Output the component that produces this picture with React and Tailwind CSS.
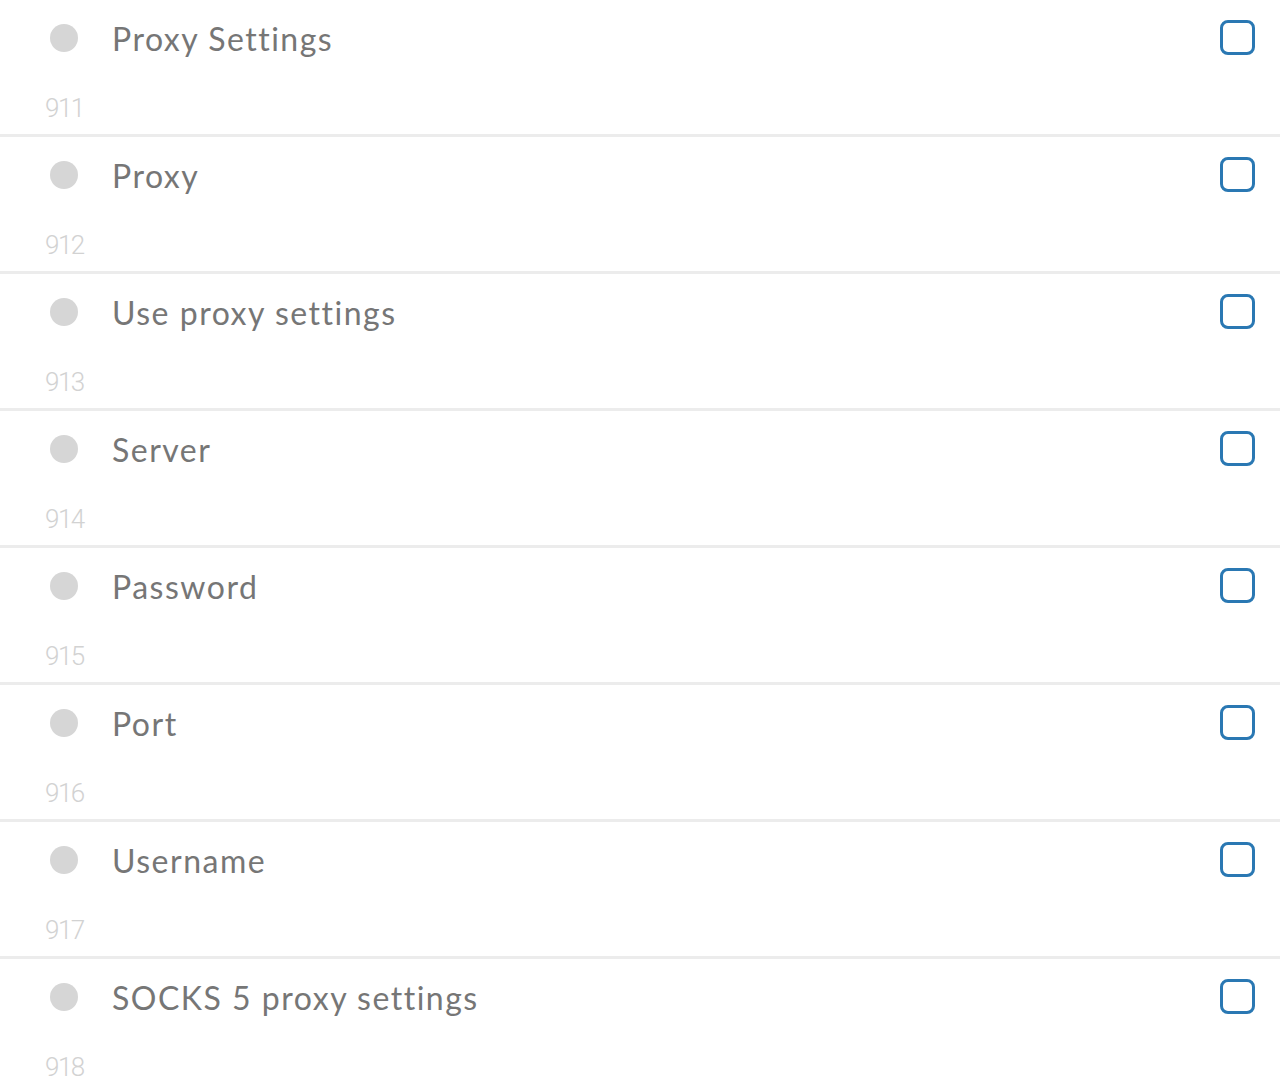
import React from 'react';

const items = [
  { title: 'Proxy Settings', num: 911 },
  { title: 'Proxy', num: 912 },
  { title: 'Use proxy settings', num: 913 },
  { title: 'Server', num: 914 },
  { title: 'Password', num: 915 },
  { title: 'Port', num: 916 },
  { title: 'Username', num: 917 },
  { title: 'SOCKS 5 proxy settings', num: 918 },
];

export default function App() {
  return (
    <div className="w-[1280px] h-[1091px] overflow-hidden bg-white">
      {items.map((item, i) => (
        <div key={i} className="h-[137px] border-b-[3px] border-[#ececec] flex flex-col">
          <div className="flex items-center h-[76px] pl-[50px] pr-[25px]">
            <div className="w-[28px] h-[28px] rounded-full bg-[#d6d6d6] shrink-0" />
            <p className="ml-[34px] text-[32px] text-[#767676] tracking-[1.5px] flex-1 mt-[1px]" style={{ fontFamily: 'Lato, "Open Sans", sans-serif' }}>
              {item.title}
            </p>
            <div className="w-[35px] h-[35px] rounded-[8px] border-[3px] border-[#2a78b3] shrink-0 -mt-[1px]" />
          </div>
          <div className="pl-[45px] mt-[19px] text-[26px] leading-none text-[#d2d2d2] font-light tracking-[-1.5px]" style={{ fontFamily: 'Roboto, sans-serif' }}>
            {item.num}
          </div>
        </div>
      ))}
    </div>
  );
}
